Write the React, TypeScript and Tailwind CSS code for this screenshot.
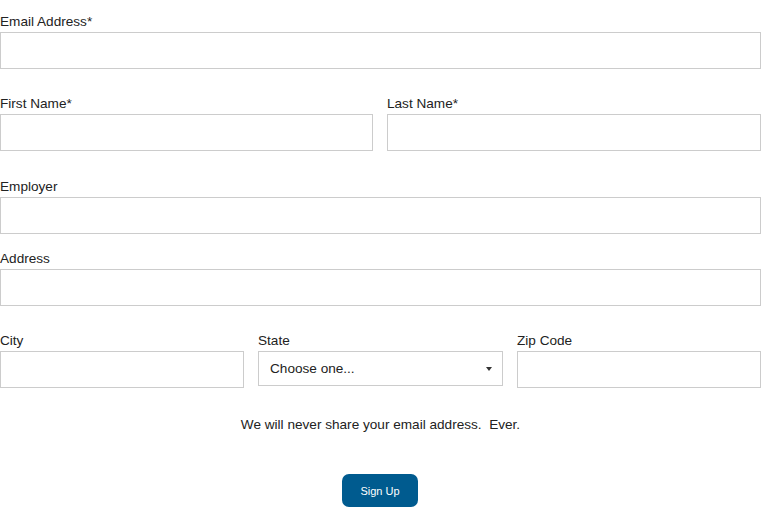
import React from "react";

const inputCls = "block w-full h-[37px] border border-[#cccccc] bg-white";

function Label({ children }: { children: React.ReactNode }) {
  return <div className="h-[18px] leading-[16px] text-[13.6px] text-[#222]">{children}</div>;
}

export default function App() {
  return (
    <div className="w-[761px] h-[518px] bg-white overflow-hidden" style={{ fontFamily: "Tahoma, 'Liberation Sans', sans-serif" }}>
      <div className="pt-[14px]">
        <Label>Email Address*</Label>
        <input className={inputCls} />
      </div>
      <div className="mt-[27px] grid grid-cols-[373px_1fr] gap-[14px]">
        <div>
          <Label>First Name*</Label>
          <input className={inputCls} />
        </div>
        <div>
          <Label>Last Name*</Label>
          <input className={inputCls} />
        </div>
      </div>
      <div className="mt-[28px]">
        <Label>Employer</Label>
        <input className={inputCls} />
      </div>
      <div className="mt-[17px]">
        <Label>Address</Label>
        <input className={inputCls} />
      </div>
      <div className="mt-[27px] grid grid-cols-[244px_245px_1fr] gap-[14px]">
        <div>
          <Label>City</Label>
          <input className={inputCls} />
        </div>
        <div>
          <Label>State</Label>
          <div className="h-[35px] border border-[#cccccc] flex items-center justify-between pl-[11px] pr-[10px] pt-[2px] text-[13.6px] text-[#222]">
            <span>Choose one...</span>
            <svg width="6" height="4" viewBox="0 0 6 4" className="-mt-[2px]"><path d="M0 0h6L3 4z" fill="#333" /></svg>
          </div>
        </div>
        <div>
          <Label>Zip Code</Label>
          <input className={inputCls} />
        </div>
      </div>
      <div className="mt-[28px] text-center text-[13.6px] leading-[18px] text-[#222]">
        We will never share your email address.&nbsp; Ever.
      </div>
      <div className="mt-[40px] pl-[342px]">
        <button className="w-[76px] h-[33px] pt-[2px] rounded-[7px] bg-[#005b8f] text-white text-[11px]">Sign Up</button>
      </div>
    </div>
  );
}
